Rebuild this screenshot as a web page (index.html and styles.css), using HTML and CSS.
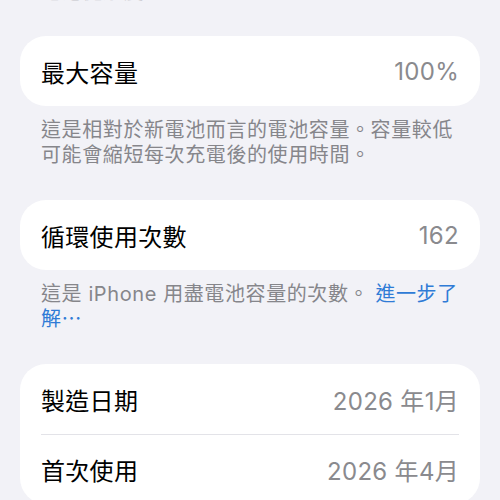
FILE: index.html
```html
<!DOCTYPE html>
<html lang="zh-Hant">
<head>
  <meta charset="UTF-8" />
  <meta name="viewport" content="width=device-width, initial-scale=1.0" />
  <title>電池健康度</title>
  <link rel="stylesheet" href="styles.css">
</head>
<body>
  <div class="page">
    <p class="note note-top">電池健康度</p>

    <div class="card">
      <div class="row">
        <span class="label">最大容量</span>
        <span class="value">100%</span>
      </div>
    </div>
    <p class="note">這是相對於新電池而言的電池容量。容量較低可能會縮短每次充電後的使用時間。</p>

    <div class="card">
      <div class="row">
        <span class="label">循環使用次數</span>
        <span class="value">162</span>
      </div>
    </div>
    <p class="note">這是 iPhone 用盡電池容量的次數。 <a class="link" href="#">進一步了解⋯</a></p>

    <div class="card">
      <div class="row">
        <span class="label">製造日期</span>
        <span class="value">2026 年1月</span>
      </div>
      <div class="row">
        <span class="label">首次使用</span>
        <span class="value">2026 年4月</span>
      </div>
    </div>
  </div>
</body>
</html>
```

FILE: styles.css
```css
body {
  margin: 0;
  background: #f2f2f7;
  font-family: Inter, "Noto Sans CJK TC", sans-serif;
  color: #000;
  overflow: hidden;
}
.page {
  padding: 0 20px;
}
.card {
  background: #fff;
  border-radius: 26px;
  padding: 0 21px;
}
.row {
  display: flex;
  justify-content: space-between;
  align-items: center;
  height: 70px;
}
.row + .row {
  border-top: 1px solid #e3e3e8;
  height: 69px;
}
.label {
  font-size: 24px;
  letter-spacing: 0.3px;
}
.value {
  font-size: 24px;
  color: #8a8a8e;
  letter-spacing: 0.3px;
}
.note {
  margin: 12px 0 32px;
  padding: 0 21px;
  font-size: 20px;
  line-height: 25px;
  letter-spacing: 0.6px;
  color: #86868b;
}
.note-top {
  margin: -20px 0 31px;
  color: #c4c4c9;
}
.link {
  color: #2f7bd6;
  text-decoration: none;
}
```
